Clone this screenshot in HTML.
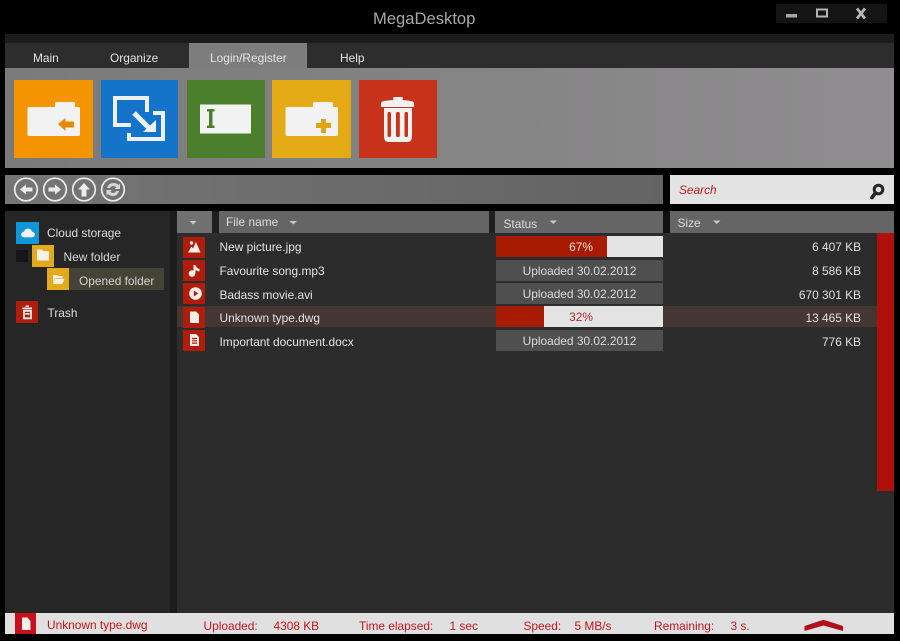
<!DOCTYPE html>
<html><head><meta charset="utf-8"><style>
html,body{margin:0;padding:0;background:#000}
#w{position:relative;width:900px;height:641px;background:#000;overflow:hidden;font-family:"Liberation Sans",Arial,sans-serif;font-size:11.9px;color:#e4e4e4}
#w div,#w svg{position:absolute}
.t{white-space:nowrap;line-height:14px}
.tile{top:79.7px;height:78px}
.ic{width:22px;height:21px;background:#b01d0c;left:183px}
.st{left:496px;width:167px;height:21px;background:#4f4f4f;text-align:center;line-height:22px;color:#dcdcdc}
.sz{right:39px;text-align:right;color:#e0e0e0;white-space:nowrap;line-height:14px}
.hd{top:211px;height:21.5px;background:#656565}
.r{color:#c0171d;white-space:nowrap;line-height:14px;top:619px}
</style></head><body><div id="w">
<div class="t" style="left:373px;top:9px;font-size:16.6px;line-height:19px;color:#a8a8a8">MegaDesktop</div>
<div style="left:776px;top:4px;width:111px;height:19px;background:#141414"></div>
<svg style="left:776px;top:4px" width="111" height="19"><rect x="10" y="10" width="11" height="3.5" fill="#a5a5a5"/><rect x="41" y="5.500" width="10" height="7" fill="none" stroke="#b5b5b5" stroke-width="2"/><path d="M81 4.500l8 10M89 4.500l-8 10" stroke="#b5b5b5" stroke-width="2.800" fill="none"/></svg>

<div style="left:5px;top:34px;width:889px;height:9px;background:#1c1c1c"></div>
<div style="left:5px;top:43px;width:889px;height:25px;background:#2d2d2d"></div>
<div style="left:189px;top:43px;width:118px;height:25px;background:#7d7d7d"></div>
<div class="t" style="left:33px;top:51px">Main</div>
<div class="t" style="left:110px;top:51px">Organize</div>
<div class="t" style="left:210px;top:51px">Login/Register</div>
<div class="t" style="left:340px;top:51px">Help</div>
<div style="left:5px;top:68px;width:889px;height:100px;background:linear-gradient(90deg,#7a7a7a,#8f8d8f)"></div>

<div class="tile" style="left:14px;width:78.700px;background:#f49500"></div>
<svg style="left:14px;top:80px" width="79" height="78"><path d="M15 27h26v-3.500q0-1.500 1.500-1.500h17q1.500 0 1.500 1.500v3.500h3.500q1.500 0 1.500 1.500v26q0 1.500-1.500 1.500h-49.500q-1.500 0-1.500-1.500v-26q0-1.500 1.500-1.500z" fill="#f2f2f2"/><path d="M44 44l7.500-6v3.500h8.500v6h-8.500v3.500z" fill="#e88a00"/></svg>

<div class="tile" style="left:100.700px;width:77.800px;background:#1374c9"></div>
<svg style="left:100px;top:80px" width="79" height="78"><path d="M31 45h-16v-27h32v14" fill="none" stroke="#eef1f4" stroke-width="4"/><path d="M53 33h10v26h-34v-6" fill="none" stroke="#eef1f4" stroke-width="4"/><path d="M34 33l15 15" stroke="#eef1f4" stroke-width="5"/><path d="M56 40v12h-13z" fill="#eef1f4"/></svg>

<div class="tile" style="left:186.700px;width:78px;background:#4b7f2c"></div>
<svg style="left:186px;top:80px" width="79" height="78"><rect x="14" y="24.500" width="51" height="29" fill="#f2f2f2"/><path d="M21 29h7.500v2.500h-2v14h2v2.500h-7.500v-2.500h2v-14h-2z" fill="#4b7f2c"/></svg>

<div class="tile" style="left:272px;width:78.700px;background:#e4ab16"></div>
<svg style="left:272px;top:80px" width="79" height="78"><path d="M15 27h26v-3.500q0-1.500 1.500-1.500h17q1.500 0 1.500 1.500v3.500h3.500q1.500 0 1.500 1.500v26q0 1.500-1.500 1.500h-49.500q-1.500 0-1.500-1.500v-26q0-1.500 1.500-1.500z" fill="#f2f2f2"/><path d="M44 43h5v-4h5v4h5v5h-5v5h-5v-5h-5z" fill="#dfa414"/></svg>

<div class="tile" style="left:358.700px;width:78px;background:#c8321a"></div>
<svg style="left:358px;top:80px" width="79" height="78"><path d="M26 21q14-2.500 27 0 3 .5 3 2.500v3.500h-33v-3.500q0-2 3-2.500z" fill="#f2f2f2"/><rect x="35" y="17" width="10" height="3" rx="1.500" fill="#f2f2f2"/><path d="M26 28h28v29q0 5-5 5h-18q-5 0-5-5z" fill="#f2f2f2"/><rect x="29.500" y="32" width="3.500" height="25" rx="1.500" fill="#c8321a"/><rect x="38" y="32" width="3.800" height="25" rx="1.500" fill="#c8321a"/><rect x="46.500" y="32" width="3.500" height="25" rx="1.500" fill="#c8321a"/></svg>

<div style="left:5px;top:175px;width:658px;height:29px;background:linear-gradient(90deg,#757575,#636363)"></div>
<svg style="left:5px;top:175px" width="130" height="29"><g fill="none" stroke="#ececec" stroke-width="1.700"><circle cx="21" cy="14.500" r="11.300"/><circle cx="50" cy="14.500" r="11.300"/><circle cx="79" cy="14.500" r="11.300"/><circle cx="108" cy="14.500" r="11.300"/></g><path d="M15 14.500l6-5v3h6.500v4h-6.500v3z" fill="#ececec"/><path d="M56 14.500l-6-5v3h-6.500v4h6.500v3z" fill="#ececec"/><path d="M79 8l6 6.500h-3.500v7h-5v-7h-3.500z" fill="#ececec"/><path d="M102 13q1.500-5 6.500-5 3 0 5 2l1.500-1.500v5.500h-5.500l1.800-1.800q-1-1.200-2.800-1.200-2.500 0-3.500 2zM114 16q-1.500 5-6 5-3 0-5-2l-1.500 1.500v-5.500h5.500l-1.800 1.800q1 1.200 2.800 1.200 2.300 0 3.200-2z" fill="#d8d8d8"/></svg>

<div style="left:670px;top:175px;width:223.500px;height:29px;background:#e3e3e3"></div>
<div class="t" style="left:679px;top:183px;color:#bc1a20;font-style:italic">Search</div>
<svg style="left:867px;top:182px" width="20" height="19"><circle cx="11.500" cy="7.500" r="4.300" fill="#e3e3e3" stroke="#262626" stroke-width="3"/><path d="M8 11.500l-3 4" stroke="#262626" stroke-width="3.600" stroke-linecap="round"/></svg>

<div style="left:5px;top:211px;width:165px;height:402px;background:#262626"></div>
<div style="left:170px;top:211px;width:7px;height:402px;background:#1c1c1c"></div>
<div style="left:177px;top:232px;width:716.500px;height:381px;background:#2c2c2c"></div>
<div style="left:177px;top:211px;width:716.500px;height:21.500px;background:#1f1f1f"></div>
<div style="left:663px;top:211px;width:7px;height:21.500px;background:#111"></div>

<div class="hd" style="left:177px;width:35px;background:#707070"></div>
<div class="hd" style="left:219px;width:270px"></div>
<div class="hd" style="left:495px;width:167.500px"></div>
<div class="hd" style="left:670px;width:223.500px"></div>
<svg style="left:0;top:211px" width="900" height="22"><g fill="#c8c8c8"><path d="M189.500 10h7l-3.500 3.500z"/><path d="M289.500 10h7.500l-3.700 3.500z"/><path d="M549.500 9.500h7.500l-3.700 3.500z"/><path d="M713 9.500h7.500l-3.700 3.500z"/></g></svg>
<div class="t" style="left:226px;top:215px;color:#dedede">File name</div>
<div class="t" style="left:503.500px;top:216.500px;color:#dedede">Status</div>
<div class="t" style="left:677.500px;top:216px;color:#dedede">Size</div>

<div style="left:877px;top:233px;width:16.500px;height:258px;background:#ad1109"></div>

<!-- tree -->
<div style="left:16px;top:222px;width:23px;height:22px;background:#0f97d8"></div>
<svg style="left:16px;top:222px" width="23" height="22"><g fill="#f2f2f2"><circle cx="8" cy="12.500" r="2.800"/><circle cx="12" cy="10.500" r="4"/><circle cx="16" cy="12.500" r="2.800"/><rect x="8" y="11" width="8" height="4.300"/></g></svg>
<div class="t" style="left:47px;top:226px;color:#dedede">Cloud storage</div>
<div style="left:16px;top:250px;width:12px;height:12px;background:#151518"></div>
<div style="left:32px;top:245px;width:22px;height:22px;background:#e2aa1c"></div>
<svg style="left:32px;top:245px" width="22" height="22"><path d="M5 4.500h5l1 1.500h6v9.500h-12z" fill="#f6f2e4"/></svg>
<div class="t" style="left:63.500px;top:250px;color:#d8d8d8">New folder</div>
<div style="left:69px;top:268px;width:95px;height:22px;background:#454236"></div>
<div style="left:47px;top:268px;width:22px;height:22px;background:#e2aa1c"></div>
<svg style="left:47px;top:268px" width="22" height="22"><path d="M6 7h4l1 1h4.500v2h-7.500l-2 4.500z" fill="#f6f2e4"/><path d="M8 10.800h9.500l-2.300 5.200h-9.200z" fill="#f6f2e4"/></svg>
<div class="t" style="left:79px;top:273.500px;color:#d6d6d0">Opened folder</div>
<div style="left:16px;top:301px;width:22px;height:22px;background:#b01d0c"></div>
<svg style="left:16px;top:301px" width="22" height="22"><path d="M6.500 6.500h9.500v1.700h-9.500zM9.500 4.500h3.500v1.500h-3.500z" fill="#f2ece8"/><path d="M8 9.800h7v7.500h-7z" fill="none" stroke="#f2ece8" stroke-width="1.800"/><rect x="9.500" y="12" width="4" height="1.700" fill="#f2ece8"/></svg>
<div class="t" style="left:47.500px;top:305.500px;color:#dedede">Trash</div>

<!-- highlighted row -->
<div style="left:177px;top:306px;width:700px;height:21px;background:#443633"></div>

<!-- rows -->
<div class="ic" style="top:236.500px"></div>
<svg style="left:183px;top:236px" width="22" height="22"><path d="M5 16.500l3.500-6 1.500 2 3-6.500 4.500 10.500z" fill="#f5efe9"/><circle cx="8.500" cy="7" r="1.700" fill="#f5efe9"/></svg>
<div class="ic" style="top:260px"></div>
<svg style="left:183px;top:260px" width="22" height="22"><circle cx="9" cy="13.500" r="3.300" fill="#f5efe9"/><path d="M10.500 13.500V5h2q.5 3 4 4v2.500q-2.500-.3-4-1.500v3.500z" fill="#f5efe9"/></svg>
<div class="ic" style="top:283px"></div>
<svg style="left:183px;top:283px" width="22" height="22"><circle cx="12.500" cy="10.500" r="6.300" fill="#f5efe9"/><path d="M10.800 7.500l4.500 3-4.500 3z" fill="#b01d0c"/></svg>
<div class="ic" style="top:306.500px"></div>
<svg style="left:183px;top:307px" width="22" height="22"><path d="M7 4.500h6l3 3v8.500h-9z" fill="#f5efe9"/></svg>
<div class="ic" style="top:330px"></div>
<svg style="left:183px;top:330px" width="22" height="22"><path d="M7 4h6l3 3v9h-9z" fill="#f5efe9"/><path d="M9 8.500h5M9 10.800h5M9 13.100h5" stroke="#b01d0c" stroke-width="1.200"/></svg>

<div class="t" style="left:219.500px;top:239.500px">New picture.jpg</div>
<div class="t" style="left:219.500px;top:264px">Favourite song.mp3</div>
<div class="t" style="left:219.500px;top:287.500px">Badass movie.avi</div>
<div class="t" style="left:219.500px;top:311px">Unknown type.dwg</div>
<div class="t" style="left:219.500px;top:334.500px">Important document.docx</div>

<div class="st" style="top:236px;background:#e4e4e4"></div>
<div class="st" style="top:236px;width:110.500px;background:#a81b03"></div>
<div class="st" style="top:236px;background:none;color:#f4e0d8;left:496px;width:170px">67%</div>
<div class="st" style="top:259.500px">Uploaded 30.02.2012</div>
<div class="st" style="top:283px">Uploaded 30.02.2012</div>
<div class="st" style="top:306px;background:#e4e4e4"></div>
<div class="st" style="top:306px;width:48px;background:#a81b03"></div>
<div class="st" style="top:306px;background:none;color:#a82a2a;width:170px">32%</div>
<div class="st" style="top:330px">Uploaded 30.02.2012</div>

<div class="sz" style="top:239.500px">6 407 KB</div>
<div class="sz" style="top:264px">8 586 KB</div>
<div class="sz" style="top:287.500px">670 301 KB</div>
<div class="sz" style="top:311px">13 465 KB</div>
<div class="sz" style="top:334.500px">776 KB</div>

<!-- status bar -->
<div style="left:5px;top:613px;width:889px;height:21px;background:#e0e0e0"></div>
<div style="left:15px;top:613px;width:21px;height:21px;background:#c8101a"></div>
<svg style="left:15px;top:613px" width="21" height="21"><path d="M7 4.500h5.500l3 3.500v9h-8.500z" fill="#f5f0ee"/></svg>
<div class="r" style="left:47px;top:617.500px">Unknown type.dwg</div>
<div class="r" style="left:203.500px">Uploaded:</div>
<div class="r" style="left:273.500px">4308 KB</div>
<div class="r" style="left:359px">Time elapsed:</div>
<div class="r" style="left:449.500px">1 sec</div>
<div class="r" style="left:523.500px">Speed:</div>
<div class="r" style="left:574.500px">5 MB/s</div>
<div class="r" style="left:654px">Remaining:</div>
<div class="r" style="left:730.500px">3 s.</div>
<svg style="left:804px;top:619px" width="40" height="13"><path d="M0.500 7L19.500.800 39 7v5L19.500 6.500 0.500 12z" fill="#b0101a"/></svg>
</div></body></html>
